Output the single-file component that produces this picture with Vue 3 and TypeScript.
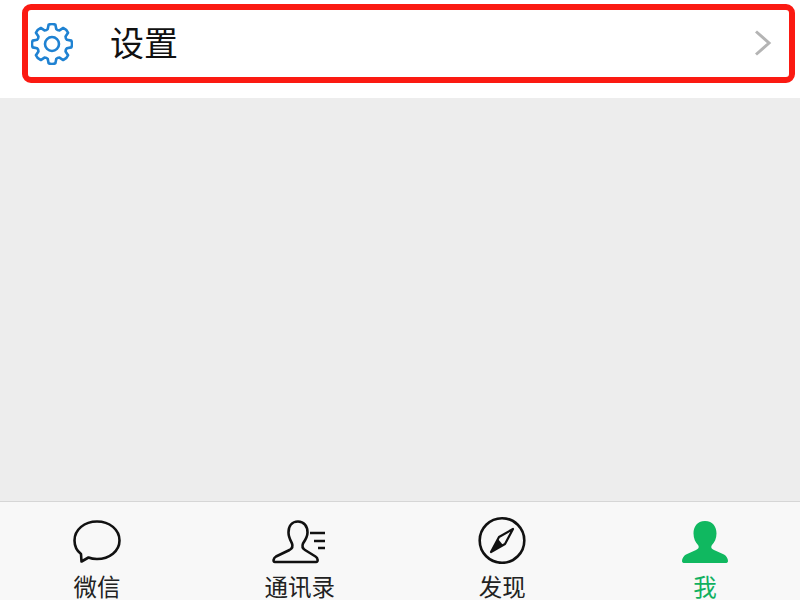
<script setup lang="ts">
interface Tab { label: string; active?: boolean; icon: string }
const tabs: Tab[] = [
  { label: '微信', icon: 'chat' },
  { label: '通讯录', icon: 'contacts' },
  { label: '发现', icon: 'compass' },
  { label: '我', icon: 'me', active: true },
]
const teeth = Array.from({ length: 8 }, (_, i) => i)
const gearPath = (() => {
  const cx = 21, cy = 21
  const pts: string[] = []
  const pol = (r: number, a: number) => {
    const t = (a * Math.PI) / 180
    return `${(cx + r * Math.cos(t)).toFixed(2)} ${(cy + r * Math.sin(t)).toFixed(2)}`
  }
  teeth.forEach((i) => {
    const c = i * 45 - 90
    pts.push(`${i === 0 ? 'M' : 'L'}${pol(15.5, c - 16)}`)
    pts.push(`L${pol(19.6, c - 10)}`)
    pts.push(`Q${pol(20.8, c)} ${pol(19.6, c + 10)}`)
    pts.push(`L${pol(15.5, c + 16)}`)
    pts.push(`Q${pol(14.6, c + 22.5)} ${pol(15.5, c + 29)}`)
  })
  return pts.join(' ') + 'Z'
})()
</script>

<template>
  <div class="page">
    <section class="settings">
      <div class="highlight">
        <svg class="gear" width="42" height="42" viewBox="0 0 42 42" fill="none" stroke="#1f82d2" stroke-width="2.6" stroke-linejoin="round">
          <path :d="gearPath" />
          <circle cx="21" cy="21" r="7" />
        </svg>
        <span class="settings-label">设置</span>
        <svg class="chevron" width="18" height="26" viewBox="0 0 18 26" fill="none" stroke="#b4b4b4" stroke-width="3">
          <path d="M2 1.5 L15 13 L2 24.5" />
        </svg>
      </div>
    </section>
    <main class="fill"></main>
    <nav class="tabbar">
      <div v-for="tab in tabs" :key="tab.label" class="tab" :class="{ active: tab.active }">
        <div class="icon">
          <svg v-if="tab.icon === 'chat'" width="48" height="44" viewBox="0 0 48 44" fill="none" stroke="#111" stroke-width="2.6" stroke-linejoin="round">
            <path d="M24 1.5 C36.5 1.5 46.5 9.5 46.5 20.5 C46.5 31 36.5 39 24 39 C20.5 39 18 38.5 15.5 37.5 L8.5 41.5 L8 34 C3.5 30.5 1.5 26 1.5 20.5 C1.5 9.5 11.5 1.5 24 1.5 Z" />
          </svg>
          <svg v-else-if="tab.icon === 'contacts'" width="56" height="44" viewBox="0 0 56 44" fill="none" stroke="#111" stroke-width="2.6" stroke-linejoin="round">
            <path d="M26 1.5 C20 1.5 16.5 6 16.5 12.5 C16.5 17 18.5 20.5 20 23.5 C21 26 20 28.5 17.5 30 L4 36.5 C1.5 38 0.5 42 3 42 L44 42 C46.5 42 46 38 43.5 36.5 L33 30 C30.5 28.5 30 26 31 23.5 C33 20.5 35.5 17 35.5 12.5 C35.5 6 32 1.5 26 1.5 Z" />
            <path d="M38 13 L53 13 M42 21 L53 21 M46 28 L53 28" stroke-width="2.6" />
          </svg>
          <svg v-else-if="tab.icon === 'compass'" width="50" height="50" viewBox="0 0 50 50" fill="none" stroke="#111">
            <circle cx="25" cy="26.5" r="22.3" stroke-width="2.6" />
            <path d="M36 15 L28 30 L14 38 L22 23 Z" stroke-width="2.2" stroke-linejoin="round" />
            <path d="M21 25 L26 31 L14 38 Z" fill="#111" stroke="none" />
          </svg>
          <svg v-else width="46" height="44" viewBox="0 0 46 44" fill="#10b860">
            <path d="M23 1 C15 1 11.5 7 11.5 13.5 C11.5 18.5 13.5 22.5 16 25 C17.5 27 16.5 29 14 30 L4 34.5 C1.5 36 0 38.5 0 41 C0 42.5 1 43 2.5 43 L43.5 43 C45 43 46 42.5 46 41 C46 38.5 44.5 36 42 34.5 L32 30 C29.5 29 28.5 27 30 25 C32.5 22.5 34.5 18.5 34.5 13.5 C34.5 7 31 1 23 1 Z" />
          </svg>
        </div>
        <span class="tab-label">{{ tab.label }}</span>
      </div>
    </nav>
  </div>
</template>

<style scoped>
.page {
  width: 800px;
  height: 600px;
  overflow: hidden;
  display: flex;
  flex-direction: column;
  background: #ededed;
  font-family: "Noto Sans CJK SC", "Liberation Sans", sans-serif;
}
.settings {
  height: 98px;
  box-sizing: border-box;
  padding: 4px 5px 15px 22px;
  background: #fff;
  flex-shrink: 0;
}
.highlight {
  height: 79px;
  box-sizing: border-box;
  border: 6px solid #fb1a12;
  border-radius: 9px;
  display: flex;
  align-items: center;
  padding: 0 17px 0 3px;
}
.gear { flex-shrink: 0; }
.settings-label {
  margin-left: 37px;
  margin-top: -3px;
  font-size: 34px;
  line-height: 40px;
  color: #111;
  flex: 1;
}
.chevron {
  flex-shrink: 0;
  margin-top: -2px;
}
.fill { flex: 1; }
.tabbar {
  height: 99px;
  box-sizing: border-box;
  flex-shrink: 0;
  border-top: 1px solid #d6d6d6;
  background: #f8f8f8;
  display: flex;
  justify-content: space-between;
  padding: 0 35px 0 37px;
}
.tab {
  width: 120px;
  display: flex;
  flex-direction: column;
  align-items: center;
}
.icon {
  height: 62px;
  flex-shrink: 0;
  display: flex;
  align-items: flex-end;
  justify-content: center;
}
.tab-label {
  margin-top: 10px;
  font-size: 23.5px;
  line-height: 24px;
  color: #222;
}
.active .tab-label { color: #10b060; }
</style>
